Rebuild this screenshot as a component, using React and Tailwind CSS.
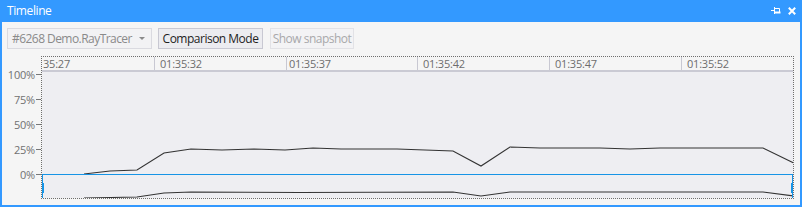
import React from "react";

const upper = [
  [84, 174], [110, 171], [137, 170], [164, 153], [191, 149], [222, 150], [254, 149],
  [285, 150], [313, 148], [341, 149], [368, 149], [397, 149], [425, 150], [453, 151],
  [481, 166], [510, 147], [540, 148], [570, 148], [600, 148], [630, 149], [660, 148],
  [690, 148], [720, 148], [763, 148], [794, 163],
];
const lower = [
  [84, 198], [137, 197], [164, 193], [191, 192], [300, 192.5], [453, 192], [481, 196],
  [510, 192], [763, 192], [794, 196],
];
const OX = 42;
const OY = 72;
const pts = (a) => a.map(([x, y]) => `${x - OX},${y - OY}`).join(" ");

const yLabels = ["100%", "75%", "50%", "25%", "0%"];

export default function App() {
  return (
    <div
      className="w-[802px] h-[207px] flex flex-col bg-[#f5f5f5] overflow-hidden whitespace-nowrap"
      style={{ fontFamily: '"Open Sans", "Noto Sans", sans-serif' }}
    >
      {/* title bar */}
      <div className="h-[22px] bg-[#3399ff] flex items-center pl-[7px] pr-[6px] shrink-0">
        <span className="text-white text-[12px] leading-none tracking-[-0.4px]">Timeline</span>
        <div className="ml-auto flex items-center gap-[7px]">
          <svg width="10" height="8" viewBox="0 0 10 8" className="block">
            <path d="M0 3.5H3.5" stroke="#fff" strokeWidth="1" />
            <path d="M3.5 0V7" stroke="#fff" strokeWidth="1" />
            <path d="M3.5 1.5H8.5V5.5H3.5" stroke="#fff" strokeWidth="1" fill="none" />
            <path d="M3.5 5.5H9.5" stroke="#fff" strokeWidth="2" />
          </svg>
          <svg width="8" height="8" viewBox="0 0 8 8" className="block">
            <path d="M0.8 0.8L7.2 7.2M7.2 0.8L0.8 7.2" stroke="#fff" strokeWidth="2" />
          </svg>
        </div>
      </div>

      {/* body */}
      <div className="flex-1 flex flex-col border-x-2 border-b-2 border-[#3399ff] min-h-0">
        {/* toolbar */}
        <div className="flex items-center pt-[6px] pl-[5px] h-[27px] shrink-0">
          <div className="w-[145px] h-[21px] border border-[#dadae0] bg-[#f2f2f4] flex items-center pl-[4px] pr-[6px]">
            <span className="text-[12px] leading-none text-[#8a8a8a] tracking-[-0.55px]">#6268 Demo.RayTracer</span>
            <svg width="6" height="3" viewBox="0 0 6 3" className="ml-auto block">
              <path d="M0 0H6L3 3Z" fill="#8a8a8a" />
            </svg>
          </div>
          <div className="ml-[6px] w-[105px] h-[21px] border border-[#c8c8d2] bg-[#ececf0] flex items-center justify-center">
            <span className="text-[12px] leading-none text-[#1e1e1e] tracking-[-0.5px]">Comparison Mode</span>
          </div>
          <div className="ml-[7px] w-[84px] h-[21px] border border-[#e2e2e6] bg-[#f3f3f5] flex items-center justify-center">
            <span className="text-[12px] leading-none text-[#a8a8aa] tracking-[-0.5px]">Show snapshot</span>
          </div>
        </div>

        {/* chart */}
        <div className="flex mt-[7px] h-[143px] shrink-0">
          {/* y axis */}
          <div className="w-[39px] flex flex-col pt-[6px]">
            {yLabels.map((l) => (
              <div key={l} className="h-[25px] flex items-center justify-end">
                <span className="text-[11px] leading-none text-[#717171] mr-[1px] tracking-[-0.2px]">{l}</span>
                <div className="w-[5px] h-px bg-[#777]" />
              </div>
            ))}
          </div>
          {/* plot box */}
          <div className="w-[753px] border border-dotted border-[#6e6e6e] flex flex-col overflow-hidden">
            <div className="h-[13px] flex bg-[#f5f5f5] shrink-0 overflow-hidden">
              <div className="w-[112px] shrink-0 pl-[1px] text-[11px] leading-[13px] text-[#6d6d6d] tracking-[-0.2px]">35:27</div>
              <div className="w-[132px] shrink-0 border-l border-[#c8c8d2] pl-[5px] text-[11px] leading-[13px] text-[#6d6d6d] tracking-[-0.2px]">01:35:32</div>
              <div className="w-[131px] shrink-0 border-l border-[#c8c8d2] pl-[2px] text-[11px] leading-[13px] text-[#6d6d6d] tracking-[-0.2px]">01:35:37</div>
              <div className="w-[132px] shrink-0 border-l border-[#c8c8d2] pl-[5px] text-[11px] leading-[13px] text-[#6d6d6d] tracking-[-0.2px]">01:35:42</div>
              <div className="w-[132px] shrink-0 border-l border-[#c8c8d2] pl-[5px] text-[11px] leading-[13px] text-[#6d6d6d] tracking-[-0.2px]">01:35:47</div>
              <div className="w-[132px] shrink-0 border-l border-[#c8c8d2] pl-[5px] text-[11px] leading-[13px] text-[#6d6d6d] tracking-[-0.2px]">01:35:52</div>
            </div>
            <div className="h-[2px] bg-[#cacad4] shrink-0" />
            <div className="flex-1 bg-[#eeeef2] relative">
              <svg width="751" height="126" viewBox="0 0 751 126" className="block absolute inset-0">
                <polyline points={pts(upper)} fill="none" stroke="#333" strokeWidth="1.1" />
                <polyline points={pts(lower)} fill="none" stroke="#333" strokeWidth="1.1" />
                <rect x="0.5" y="102.5" width="750" height="24" fill="none" stroke="#1694e6" strokeWidth="1" />
                <rect x="0" y="111" width="2" height="10" fill="#1694e6" />
                <rect x="749" y="111" width="2" height="10" fill="#1694e6" />
              </svg>
            </div>
          </div>
        </div>
      </div>
    </div>
  );
}
